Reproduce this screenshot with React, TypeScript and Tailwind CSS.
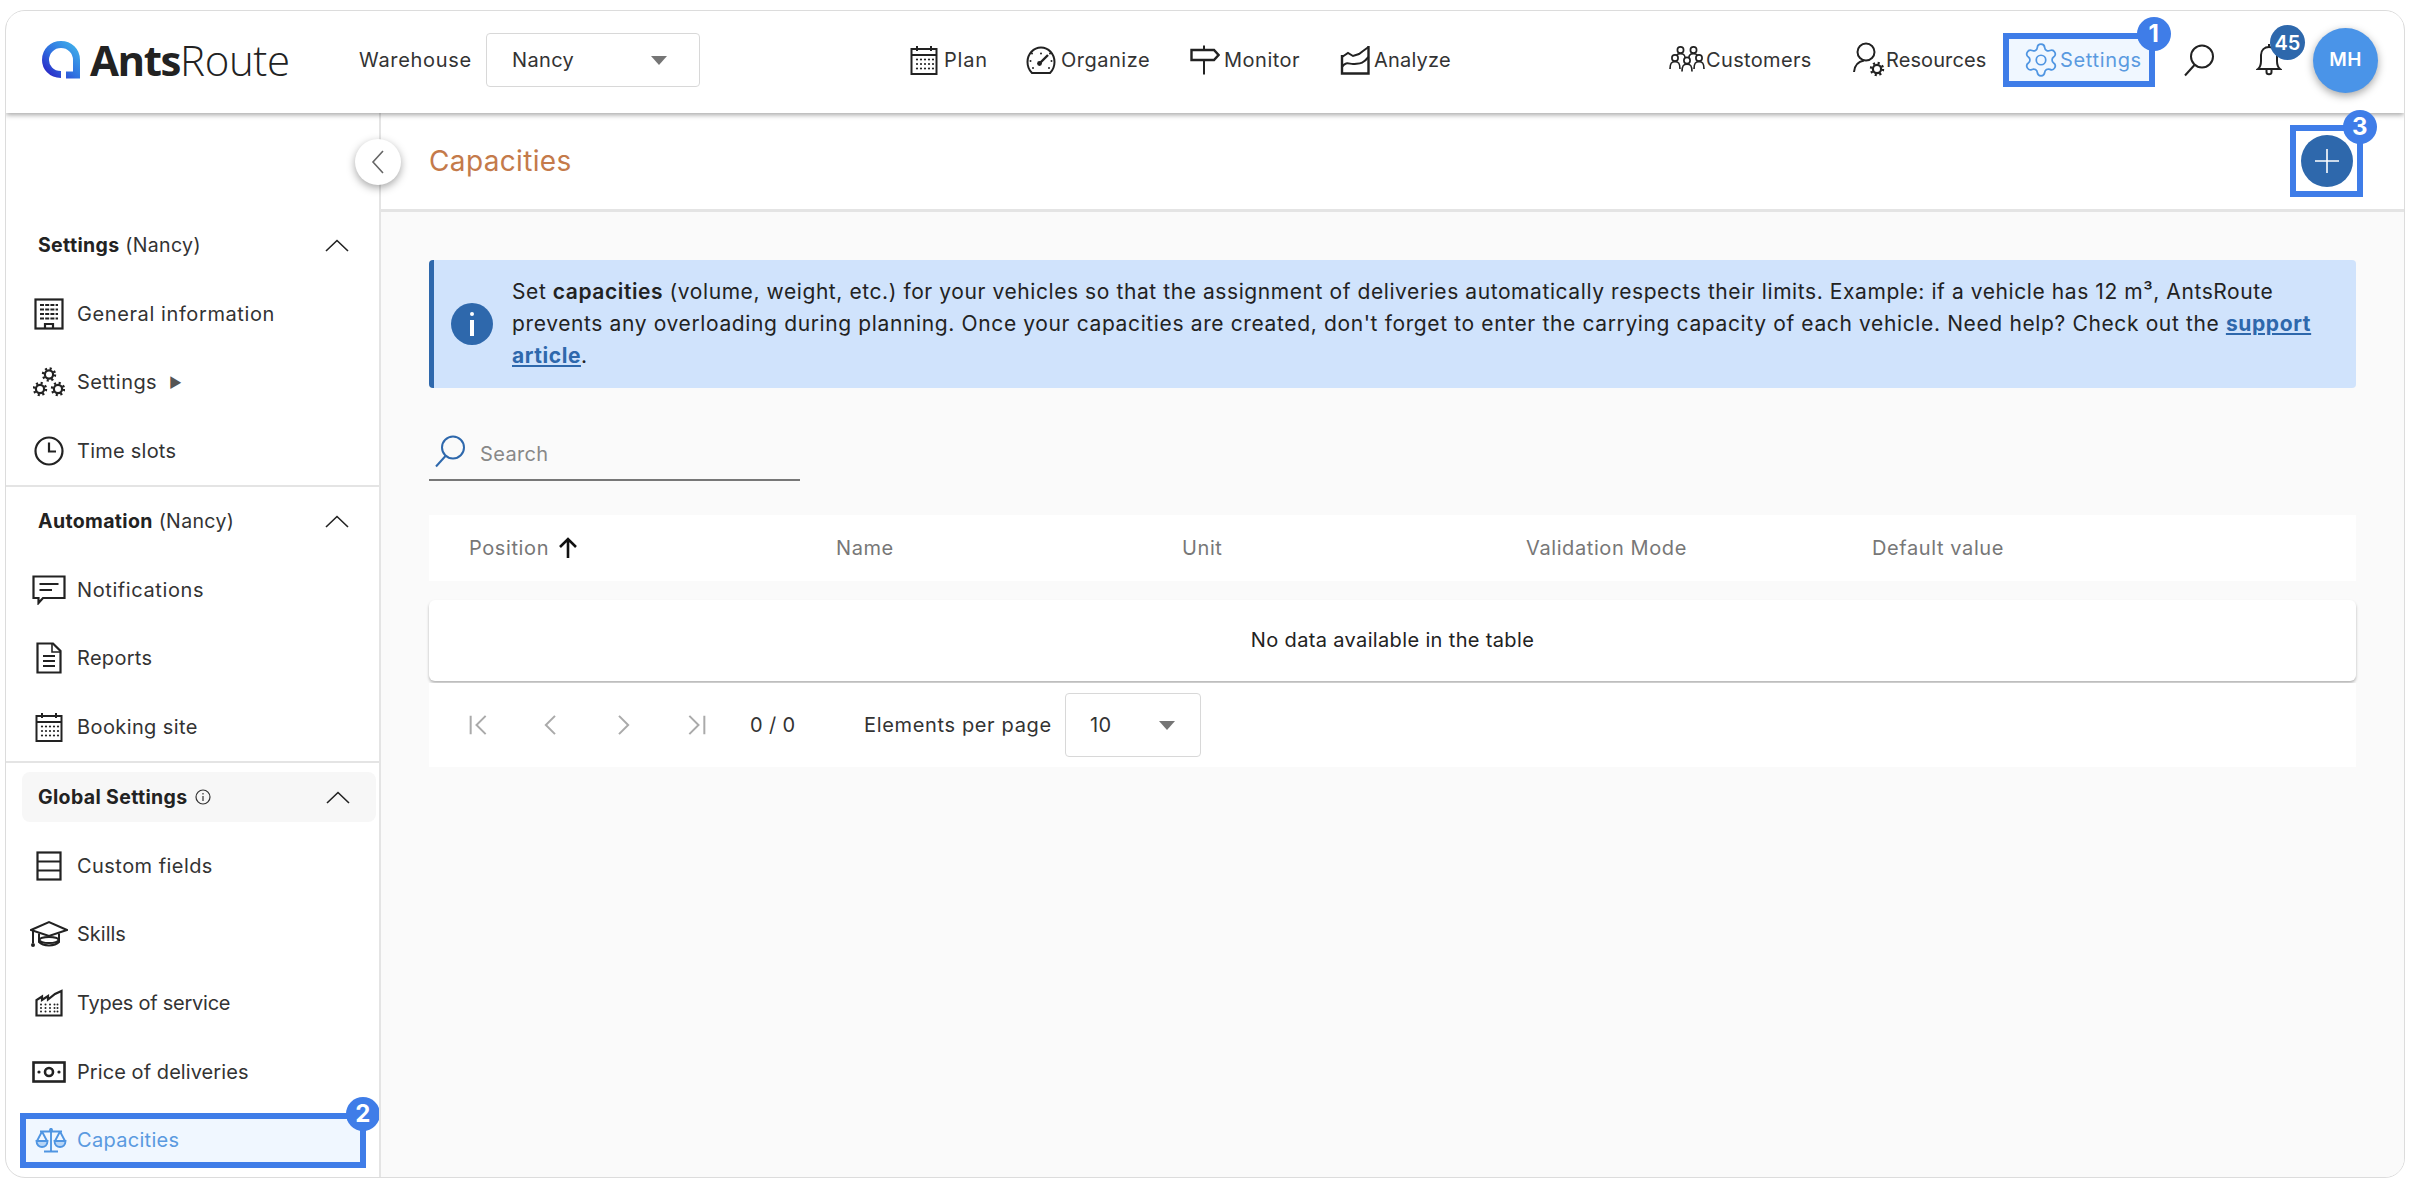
import React from "react";
import { Settings as GearIcon } from "lucide-react";

const S = ({ w, h, vb, children, c = "#222", sw = 2 }: any) => (
  <svg width={w} height={h} viewBox={vb} fill="none" stroke={c} strokeWidth={sw} strokeLinecap="butt" strokeLinejoin="miter">
    {children}
  </svg>
);

const dots = (xs: number[], ys: number[], c = "#222", r = 1.1) =>
  ys.flatMap((y) => xs.map((x) => <circle key={x + "-" + y} cx={x} cy={y} r={r} fill={c} stroke="none" />));

const Logo = () => (
  <svg width="38" height="38" viewBox="0 0 38 38" fill="none">
    <defs>
      <linearGradient id="lg" x1="1" y1="0" x2="0" y2="1">
        <stop offset="0" stopColor="#3fb0ea" />
        <stop offset="0.55" stopColor="#2f6fe0" />
        <stop offset="1" stopColor="#2a22c4" />
      </linearGradient>
    </defs>
    <path d="M19 33.5 C9 33.5 3.5 26 3.5 19 C3.5 10 10.5 3.5 19 3.5 C27.5 3.5 34.5 10 34.5 19 V34 H24" stroke="url(#lg)" strokeWidth="7" />
  </svg>
);

const CalIcon = ({ w = 28, h = 30 }: any) => (
  <S w={w} h={h} vb="0 0 28 30">
    <rect x="1.5" y="4" width="25" height="25" />
    <path d="M1.5 10 H26.5 M7 1 V6 M21 1 V6" />
    {dots([7, 11, 15, 19, 23], [14.5, 19, 23.5])}
  </S>
);
const GaugeIcon = () => (
  <S w={30} h={30} vb="0 0 30 30">
    <path d="M6 28 C3 25 1.5 21 1.5 17 C1.5 9 7.5 2.5 15 2.5 C22.5 2.5 28.5 9 28.5 17 C28.5 21 27 25 24 28 Z" />
    <path d="M13.5 18.5 L22 10" strokeWidth="2.4" />
    <circle cx="13.5" cy="18.5" r="2.4" fill="#222" stroke="none" />
    {dots([6, 15, 24], [8.5], "#222", 1)}
    {dots([4.5, 25.5], [16], "#222", 1)}
    {dots([7, 23], [23], "#222", 1)}
  </S>
);
const SignIcon = () => (
  <S w={30} h={30} vb="0 0 30 30">
    <path d="M14 0.5 V5 M14 15 V29.5" />
    <path d="M1.5 5 H24 L28.5 10 L24 15 H1.5 Z" strokeWidth="2.4" />
  </S>
);
const AnalyzeIcon = () => (
  <S w={30} h={30} vb="0 0 30 30">
    <path d="M2 10 V28.5 H28.5 V1" strokeWidth="2.4" />
    <path d="M2 12 L8 8 L13 11 L19 9 L23 6 L28.5 2" />
    <path d="M2 22 C6 16 9 19 13 19 C19 18 22 20 28.5 12" />
  </S>
);
const Person = ({ x, y }: any) => (
  <g>
    <circle cx={x} cy={y} r="3.1" fill="#fff" />
    <path d={`M${x - 5} ${y + 11} C${x - 5} ${y + 6} ${x - 4} ${y + 3.6} ${x} ${y + 3.6} C${x + 4} ${y + 3.6} ${x + 5} ${y + 6} ${x + 5} ${y + 11}`} fill="#fff" />
  </g>
);
const CustomersIcon = () => (
  <S w={36} h={30} vb="0 0 36 30" sw={1.7}>
    <Person x={11.5} y={5} />
    <Person x={24.5} y={5} />
    <Person x={6} y={13} />
    <Person x={30} y={13} />
    <Person x={18} y={15.5} />
  </S>
);
const Cog = ({ cx, cy }: any) => (
  <g>
    <circle cx={cx} cy={cy} r="6" strokeDasharray="2.1 2.6" strokeWidth="2.4" />
    <circle cx={cx} cy={cy} r="4.1" strokeWidth="2.2" fill="#fff" />
  </g>
);
const ResourcesIcon = () => (
  <S w={32} h={36} vb="0 0 32 36">
    <circle cx="13" cy="10" r="8.5" />
    <path d="M1 30 C1.5 24 5 19.5 11 18.5" />
    <Cog cx={24} cy={27} />
  </S>
);
const SearchIcon = ({ c = "#222", w = 32, h = 33 }: any) => (
  <S w={w} h={h} vb="0 0 32 33" c={c}>
    <ellipse cx="19" cy="12.5" rx="11" ry="11" />
    <path d="M11.5 21 L2 31.5" />
  </S>
);
const BellIcon = () => (
  <S w={26} h={34} vb="0 0 26 34">
    <path d="M2 26 C4.5 24 5 22 5 18 V12 C5 7 8.5 4 13 4 C17.5 4 21 7 21 12 V18 C21 22 21.5 24 24 26 Z" />
    <path d="M13 1 V4" />
    <path d="M10.5 26 V29 C10.5 32 15.5 32 15.5 29 V26" />
  </S>
);
const BuildingIcon = () => (
  <S w={30} h={32} vb="0 0 30 32" sw={2.2}>
    <rect x="1.5" y="1.5" width="27" height="29" />
    <path d="M11 31 V26 H19 V31" />
    {[7, 11.5, 16, 20.5].map((y) => (
      <path key={y} d={`M6 ${y} H24`} strokeWidth="2.2" strokeDasharray="4 1.2" />
    ))}
  </S>
);
const CogsIcon = () => (
  <S w={32} h={30} vb="0 0 32 30">
    <Cog cx={16} cy={7.5} />
    <Cog cx={7} cy={22} />
    <Cog cx={25} cy={22} />
  </S>
);
const ClockIcon = () => (
  <S w={30} h={30} vb="0 0 30 30" sw={2.2}>
    <circle cx="15" cy="15" r="13.5" />
    <path d="M15 6.5 V15.5 H22" />
  </S>
);
const MsgIcon = () => (
  <S w={34} h={30} vb="0 0 34 30" sw={2.2}>
    <path d="M1.5 1.5 H32.5 V23 H11 L6.5 28 V23 H1.5 Z" />
    <path d="M7.5 9 H26.5 M7.5 15 H20" />
  </S>
);
const FileIcon = () => (
  <S w={26} h={32} vb="0 0 26 32" sw={2.2}>
    <path d="M1.5 1.5 H17 L24.5 9 V30.5 H1.5 Z" />
    <path d="M16 1.5 V10 H24.5" strokeWidth="1.6" />
    <path d="M7 14 H19 M7 19 H19 M7 24 H19" />
  </S>
);
const RowsIcon = () => (
  <S w={26} h={30} vb="0 0 26 30" sw={2.2}>
    <rect x="1.5" y="1.5" width="23" height="27" />
    <path d="M1.5 10.5 H24.5 M1.5 19.5 H24.5" />
  </S>
);
const CapIcon = () => (
  <S w={38} h={28} vb="0 0 38 28" sw={2}>
    <path d="M1 10 L19 2 L37 10 L19 16 Z" />
    <path d="M9 13.5 V22 C13 26.5 25 26.5 29 22 V13.5" />
    <ellipse cx="19" cy="20" rx="9.5" ry="3" />
    <path d="M3 11 V23" />
    <circle cx="3" cy="25" r="2" fill="#222" stroke="none" />
  </S>
);
const FactoryIcon = () => (
  <S w={28} h={28} vb="0 0 28 28" sw={2.2}>
    <path d="M1.5 26.5 V11 L7 7.5 V11 L13 7 V10.5 L20 5 L26.5 2 V26.5 Z" />
    {dots([6, 10.5, 15, 19.5, 22.5], [15.5, 19, 22.5], "#222", 1)}
  </S>
);
const MoneyIcon = () => (
  <S w={34} h={22} vb="0 0 34 22" sw={2.6}>
    <rect x="1.5" y="1.5" width="31" height="19" />
    <circle cx="17" cy="11" r="4" />
    {dots([7, 27], [11], "#222", 1.6)}
  </S>
);
const ScaleIcon = () => (
  <S w={32} h={26} vb="0 0 32 26" c="#4f95e2" sw={1.9}>
    <path d="M16 1 V24 M9 24.5 H23 M5 4.5 H27" />
    <circle cx="16" cy="3" r="2" fill="#4f95e2" stroke="none" />
    <path d="M7 4.5 L2 14 M7 4.5 L12 14 M25 4.5 L20 14 M25 4.5 L30 14" />
    <path d="M1.5 14 H12.5 C12.5 22 1.5 22 1.5 14 Z" fill="#4f95e2" fillOpacity=".35" />
    <path d="M19.5 14 H30.5 C30.5 22 19.5 22 19.5 14 Z" fill="#4f95e2" fillOpacity=".35" />
  </S>
);
const Chevron = () => (
  <svg width="24" height="13" viewBox="0 0 24 13" fill="none" stroke="#222" strokeWidth="1.6">
    <path d="M1 12 L12 1.5 L23 12" />
  </svg>
);
const Caret = () => <div className="w-0 h-0 border-l-[8px] border-r-[8px] border-t-[9px] border-l-transparent border-r-transparent border-t-[#757575]" />;

const Badge = ({ n, className }: any) => (
  <div className={"absolute z-30 w-[34px] h-[34px] rounded-full bg-[#3f7de8] text-white flex items-center justify-center text-[24px] font-bold " + className}>{n}</div>
);

const NavItem = ({ icon, label, className }: any) => (
  <div className={"flex items-center text-[20px] text-[#333] shrink-0 " + className}>
    {icon}
    <span>{label}</span>
  </div>
);

const Item = ({ icon, label, extra, tr }: any) => (
  <div className="h-[68.6px] flex items-center pl-[23px] text-[20px] text-[#333]">
    <div className="w-[40px] flex justify-center mr-[8px]">{icon}</div>
    <span className={tr}>{label}</span>
    {extra}
  </div>
);

const Head = ({ bold, rest }: any) => (
  <div className="h-[68.6px] flex items-center justify-between pl-[32px] pr-[30px] text-[19.5px] text-[#222]">
    <span>
      <b className="font-bold">{bold}</b> <span className="text-[#333]">{rest}</span>
    </span>
    <Chevron />
  </div>
);

export default function App() {
  return (
    <div className="w-full h-[1187px] bg-white pt-[10px] pb-[9px] pl-[5px] pr-[5px] overflow-hidden tracking-[0.022em]" style={{ fontFamily: "Inter, 'Liberation Sans', sans-serif" }}>
      <div className="h-full border border-[#dcdcdc] rounded-[20px] bg-white flex flex-col overflow-hidden">
        {/* header */}
        <header className="relative z-10 h-[102px] shrink-0 bg-white flex items-center pl-[36px] pr-[26px] pb-[4px] shadow-[0_2px_5px_rgba(0,0,0,0.35)]">
          <Logo />
          <div className="ml-[10px] w-[198px] shrink-0 text-[42px] leading-none tracking-[-0.8px] text-[#222] whitespace-nowrap" style={{ fontFamily: "'Open Sans', sans-serif" }}>
            <span className="font-bold tracking-[-1.4px]">Ants</span>
            <span className="font-light tracking-[-0.4px]">Route</span>
          </div>
          <span className="ml-[71px] w-[127px] shrink-0 text-[20px] text-[#333] tracking-[0.7px]">Warehouse</span>
          <div className="w-[214px] h-[54px] shrink-0 border border-[#d8d8d8] rounded-[4px] flex items-center justify-between pl-[25px] pr-[32px] text-[20px] text-[#333]">
            Nancy
            <Caret />
          </div>
          <div className="ml-[210px] flex items-center">
            <NavItem icon={<CalIcon />} label={<span className="tracking-[0.8px]">Plan</span>} className="w-[116px] gap-[6px]" />
            <NavItem icon={<GaugeIcon />} label={<span className="tracking-[0.5px]">Organize</span>} className="w-[164px] gap-[5px]" />
            <NavItem icon={<SignIcon />} label={<span className="tracking-[0.5px]">Monitor</span>} className="w-[150px] gap-[4px]" />
            <NavItem icon={<AnalyzeIcon />} label={<span className="tracking-[0.2px]">Analyze</span>} className="gap-[4px]" />
          </div>
          <div className="ml-auto flex items-center">
            <NavItem icon={<CustomersIcon />} label="Customers" className="w-[184px] gap-[1px]" />
            <NavItem icon={<ResourcesIcon />} label={<span className="tracking-[0.1px]">Resources</span>} className="w-[150px] gap-[1px]" />
            <div className="relative w-[152px] h-[54px] border-[6px] border-[#3f7de8] bg-[#f0f7ff] flex items-center pl-[13px] text-[20px] text-[#5a9ae0] tracking-[0.65px]">
              <GearIcon size={38} strokeWidth={1.1} color="#4f95e2" />
              <span>Settings</span>
              <Badge n="1" className="-top-[22px] -right-[22px]" />
            </div>
            <div className="ml-[28px]">
              <SearchIcon />
            </div>
            <div className="relative ml-[41px] mr-[31px]">
              <BellIcon />
              <div className="absolute -top-[18px] left-[14px] w-[35px] h-[35px] rounded-full bg-[#2e68ac] text-white text-[20px] font-semibold tracking-normal flex items-center justify-center">45</div>
            </div>
            <div className="relative w-[65px] h-[65px] rounded-full bg-[#4a94e8] text-white font-semibold text-[19px] flex items-center justify-center shadow-[0_3px_8px_rgba(0,0,0,0.35)]">MH</div>
          </div>
        </header>

        {/* body */}
        <div className="relative flex-1 flex min-h-0">
          <button className="absolute left-[349px] top-[26px] z-20 w-[46px] h-[46px] rounded-full bg-white flex items-center justify-center shadow-[0_3px_8px_rgba(0,0,0,0.35)]">
            <svg width="14" height="24" viewBox="0 0 14 24" fill="none" stroke="#666" strokeWidth="1.6"><path d="M12 1 L2 12 L12 23" /></svg>
          </button>

          <aside className="w-[375px] shrink-0 border-r-2 border-[#e4e4e4] pt-[98px] overflow-hidden">
            <div className="border-b-2 border-[#e4e4e4] h-[276px]">
              <Head bold="Settings" rest="(Nancy)" />
              <Item icon={<BuildingIcon />} label="General information" tr="tracking-[0.6px]" />
              <Item icon={<CogsIcon />} label="Settings" tr="tracking-[0.44px]" extra={<span className="ml-[12px] text-[#555] text-[14px]">▶</span>} />
              <Item icon={<ClockIcon />} label="Time slots" tr="tracking-[0.24px]" />
            </div>
            <div className="border-b-2 border-[#e4e4e4] h-[276px]">
              <Head bold="Automation" rest="(Nancy)" />
              <Item icon={<MsgIcon />} label="Notifications" tr="tracking-[0.6px]" />
              <Item icon={<FileIcon />} label="Reports" tr="tracking-[0.3px]" />
              <Item icon={<CalIcon />} label="Booking site" tr="tracking-[0.4px]" />
            </div>
            <div className="h-[68.6px] flex items-center">
              <div className="ml-[16px] mr-[3px] flex-1 h-[50px] rounded-[8px] bg-[#f7f7f7] flex items-center justify-between pl-[16px] pr-[26px]">
                <span className="flex items-center gap-[7px] text-[19.5px] font-bold text-[#222]">
                  Global Settings
                  <svg width="16" height="16" viewBox="0 0 16 16" fill="none" stroke="#333" strokeWidth="1.2"><circle cx="8" cy="8" r="7" /><path d="M8 7 V12 M8 4 V5.5" /></svg>
                </span>
                <Chevron />
              </div>
            </div>
            <Item icon={<RowsIcon />} label="Custom fields" tr="tracking-[0.45px]" />
            <Item icon={<CapIcon />} label="Skills" tr="tracking-[0px]" />
            <Item icon={<FactoryIcon />} label="Types of service" tr="tracking-[-0.25px]" />
            <Item icon={<MoneyIcon />} label="Price of deliveries" tr="tracking-[0.07px]" />
            <div className="relative ml-[14px] mt-[7px] w-[346px] h-[55px] border-[6px] border-[#3f7de8] bg-[#f0f7ff] flex items-center pl-[9px] text-[20px] text-[#5a9ae0] tracking-[0.3px]">
              <div className="w-[32px] mr-[10px] flex justify-center"><ScaleIcon /></div>
              Capacities
              <Badge n="2" className="-top-[22px] -right-[20px]" />
            </div>
          </aside>

          <main className="flex-1 min-w-0 bg-[#fafafa] flex flex-col">
            <div className="h-[99px] shrink-0 bg-white border-b-[3px] border-[#e4e4e4] flex items-center justify-between pl-[48px] pr-[41px]">
              <h1 className="text-[28px] font-normal text-[#c47a4a]">Capacities</h1>
              <div className="relative w-[73px] h-[72px] border-[6px] border-[#3f7de8] flex items-center justify-center">
                <div className="w-[52px] h-[52px] rounded-full bg-[#2e68ac] flex items-center justify-center">
                  <svg width="26" height="26" viewBox="0 0 26 26" stroke="#fff" strokeWidth="1.6"><path d="M13 1 V25 M1 13 H25" /></svg>
                </div>
                <Badge n="3" className="-top-[21px] -right-[20px]" />
              </div>
            </div>
            <div className="pt-[48px] pl-[48px] pr-[48px]">
              <div className="h-[128px] border-l-[5px] border-[#2e68ac] rounded-[4px] bg-[#d0e3fc] flex items-center pl-[17px] text-[21px] leading-[32px] text-[#222]">
                <div className="w-[42px] h-[42px] shrink-0 rounded-full bg-[#2e68ac] text-white flex items-center justify-center">
                  <svg width="6" height="24" viewBox="0 0 6 24" fill="#fff"><rect x="1" y="0" width="4" height="4" rx="2" /><rect x="1" y="8" width="4" height="16" /></svg>
                </div>
                <p className="ml-[19px] whitespace-nowrap">
                  <span className="tracking-[0.58px]">
                    Set <b className="font-semibold">capacities</b> (volume, weight, etc.) for your vehicles so that the assignment of deliveries automatically respects their limits. Example: if a vehicle has 12 m³, AntsRoute
                  </span>
                  <br />
                  <span className="tracking-[0.63px]">
                    prevents any overloading during planning. Once your capacities are created, don't forget to enter the carrying capacity of each vehicle. Need help? Check out the <a className="font-bold text-[#2e68ac] underline">support</a>
                  </span>
                  <br />
                  <span className="tracking-[0.55px]">
                    <a className="font-bold text-[#2e68ac] underline">article</a>.
                  </span>
                </p>
              </div>

              <div className="mt-[47px] w-[371px] h-[46px] border-b-2 border-[#777] flex items-start pl-[5px]">
                <SearchIcon c="#2e68ac" />
                <span className="ml-[14px] mt-[4px] text-[20px] text-[#888]">Search</span>
              </div>

              <div className="mt-[34px] h-[66px] bg-white grid grid-cols-[367px_346px_344px_346px_1fr] items-center pl-[40px] text-[20px] text-[#777] tracking-[0.03em]">
                <span className="flex items-center gap-[9px]">
                  Position
                  <svg width="20" height="22" viewBox="0 0 20 22" fill="none" stroke="#111" strokeWidth="2.6"><path d="M10 21 V2 M2 10 L10 2 L18 10" /></svg>
                </span>
                <span>Name</span>
                <span>Unit</span>
                <span>Validation Mode</span>
                <span>Default value</span>
              </div>
              <div className="mt-[19px] h-[81px] pb-[2px] bg-white rounded-[6px] shadow-[0_2px_3px_rgba(0,0,0,0.28)] flex items-center justify-center text-[20px] text-[#222]">
                No data available in the table
              </div>
              <div className="mt-[2px] h-[84px] bg-white flex items-center pl-[38px] text-[20px] text-[#333]">
                <svg width="24" height="20" viewBox="0 0 24 24" fill="none" stroke="#aaa" strokeWidth="2.4"><path d="M2 1 V23 M20 1 L9 12 L20 23" /></svg>
                <svg className="ml-[52px]" width="14" height="20" viewBox="0 0 14 24" fill="none" stroke="#aaa" strokeWidth="2.4"><path d="M13 1 L2 12 L13 23" /></svg>
                <svg className="ml-[60px]" width="14" height="20" viewBox="0 0 14 24" fill="none" stroke="#aaa" strokeWidth="2.4"><path d="M1 1 L12 12 L1 23" /></svg>
                <svg className="ml-[53px]" width="24" height="20" viewBox="0 0 24 24" fill="none" stroke="#aaa" strokeWidth="2.4"><path d="M22 1 V23 M4 1 L15 12 L4 23" /></svg>
                <span className="ml-[42px] w-[114px] shrink-0">0 / 0</span>
                <span className="w-[201px] shrink-0 tracking-[0.65px]">Elements per page</span>
                <div className="w-[136px] h-[64px] border border-[#d8d8d8] rounded-[4px] flex items-center justify-between pl-[24px] pr-[25px]">
                  10
                  <Caret />
                </div>
              </div>
            </div>
          </main>
        </div>
      </div>
    </div>
  );
}
